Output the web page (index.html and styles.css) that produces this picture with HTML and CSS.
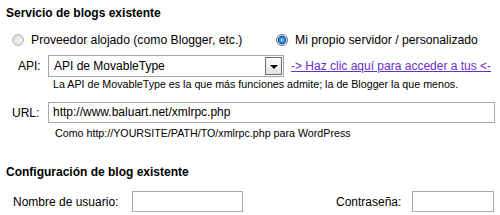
FILE: index.html
```html
<!DOCTYPE html>
<html>
<head>
<meta charset="utf-8">
<link rel="stylesheet" href="styles.css">
</head>
<body>
<div class="page">
  <div class="heading">Servicio de blogs existente</div>
  <div class="radios">
    <label class="radio-opt opt-hosted"><span class="radio"></span>Proveedor alojado (como Blogger, etc.)</label>
    <label class="radio-opt opt-own"><span class="radio checked"></span>Mi propio servidor / personalizado</label>
  </div>
  <div class="row row-api">
    <span class="label label-api">API:</span>
    <div class="select">
      <span class="select-text">API de MovableType</span>
      <span class="select-btn"><span class="tri"></span></span>
    </div>
    <a class="link" href="#">-&gt; Haz clic aquí para acceder a tus &lt;-</a>
  </div>
  <div class="hint hint-api">La API de MovableType es la que más funciones admite; la de Blogger la que menos.</div>
  <div class="row row-url">
    <span class="label label-url">URL:</span>
    <div class="input input-url">http://www.baluart.net/xmlrpc.php</div>
  </div>
  <div class="hint hint-url">Como http://YOURSITE/PATH/TO/xmlrpc.php para WordPress</div>
  <div class="heading heading2">Configuración de blog existente</div>
  <div class="row row-login">
    <span class="label label-user">Nombre de usuario:</span>
    <div class="input input-user"></div>
    <span class="label label-pass">Contraseña:</span>
    <div class="input input-pass"></div>
  </div>
</div>
</body>
</html>
```
FILE: styles.css
```css
html, body {
  margin: 0;
  padding: 0;
  background: #fff;
}
body {
  font-family: "Liberation Sans", Arial, sans-serif;
  font-size: 12px;
  color: #000;
  width: 500px;
  height: 215px;
  overflow: hidden;
}
.page {
  padding: 6px 0 0 6px;
}
.heading {
  font-weight: bold;
  font-size: 12px;
  line-height: 15px;
  height: 15px;
}
.radios {
  display: flex;
  margin-top: 12px;
  height: 14px;
  align-items: center;
}
.radio-opt {
  display: flex;
  align-items: center;
  white-space: nowrap;
  line-height: 14px;
  font-size: 12.2px;
}
.opt-hosted {
  margin-left: 6px;
  width: 264px;
}
.radio {
  box-sizing: border-box;
  width: 12px;
  height: 12px;
  border-radius: 50%;
  border: 1px solid #b4b4b4;
  background: radial-gradient(circle at 60% 60%, #f4f4f4 0%, #dcdcdc 70%, #c8c8c8 100%);
  margin-right: 7px;
  flex: none;
}
.radio.checked {
  border-color: #5a6f8a;
  background: radial-gradient(circle at 50% 50%, #9ed7ff 0%, #2a8bd8 35%, #0d4f91 55%, #e8edf2 62%, #cfd6de 100%);
}
.row {
  display: flex;
  align-items: center;
}
.row-api {
  margin-top: 8px;
  height: 22px;
}
.label-api {
  margin-left: 12px;
  width: 30px;
}
.select {
  box-sizing: border-box;
  width: 236px;
  height: 22px;
  border: 1px solid #a5a5a5;
  display: flex;
  align-items: center;
  justify-content: space-between;
  padding: 1px 1px 1px 5px;
}
.select-text {
  line-height: 14px;
}
.select-btn {
  box-sizing: border-box;
  width: 17px;
  height: 18px;
  border: 1px solid #6e6e6e;
  background: linear-gradient(#fdfdfd, #e2e2e2);
  display: flex;
  align-items: center;
  justify-content: center;
}
.tri {
  width: 0;
  height: 0;
  border-left: 4px solid transparent;
  border-right: 4px solid transparent;
  border-top: 4px solid #000;
  margin-top: 1px;
}
.link {
  margin-left: 7px;
  color: #6a2dc8;
  text-decoration: underline;
  white-space: nowrap;
  line-height: 14px;
}
.hint {
  font-size: 10.7px;
  line-height: 13px;
}
.hint-api {
  margin-top: 1px;
  margin-left: 47px;
}
.row-url {
  margin-top: 11px;
  height: 21px;
}
.label-url {
  margin-left: 6px;
  width: 36px;
}
.input {
  box-sizing: border-box;
  border: 1px solid #a9a9a9;
  height: 21px;
  line-height: 19px;
  padding-left: 4px;
  white-space: nowrap;
}
.input-url {
  width: 447px;
}
.hint-url {
  margin-top: 4px;
  margin-left: 49px;
}
.heading2 {
  margin-top: 25px;
}
.row-login {
  margin-top: 11px;
  height: 21px;
}
.label-user {
  margin-left: 7px;
  width: 119px;
}
.input-user {
  width: 111px;
}
.label-pass {
  margin-left: 93px;
  width: 76px;
}
.input-pass {
  width: 82px;
}
```
